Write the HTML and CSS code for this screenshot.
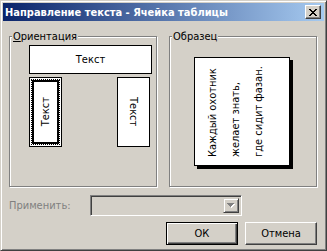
FILE: index.html
```html
<!DOCTYPE html>
<html>
<head>
    <title>Направление текста - Ячейка таблицы</title>
    <link rel="stylesheet" href="styles.css">
</head>
<body>
    <div class="window">
        <!-- Title bar -->
        <div class="titlebar">
            <span class="title">Направление текста - Ячейка таблицы</span>
            <button class="close-btn">
                <svg width="8" height="7" viewBox="0 0 8 7" shape-rendering="crispEdges">
                    <path d="M0 0h2v1h-2zM6 0h2v1h-2zM1 1h2v1h-2zM5 1h2v1h-2zM2 2h4v1h-4zM3 3h2v1h-2zM2 4h4v1h-4zM1 5h2v1h-2zM5 5h2v1h-2zM0 6h2v1h-2zM6 6h2v1h-2z" fill="#000"/>
                </svg>
            </button>
        </div>

        <div class="content">
            <div class="groups">
                <!-- Orientation -->
                <div class="group">
                    <span class="legend"><u>О</u>риентация</span>
                    <div class="orient">
                        <div class="orient-btn horizontal">Текст</div>
                        <div class="orient-row">
                            <div class="orient-btn vertical selected">
                                <div class="focus">
                                    <div class="face"><span class="text-up">Текст</span></div>
                                </div>
                            </div>
                            <div class="orient-btn vertical"><span class="text-down">Текст</span></div>
                        </div>
                    </div>
                </div>

                <!-- Sample -->
                <div class="group">
                    <span class="legend">Образец</span>
                    <div class="sample">
                        <div class="sample-text">Каждый охотник<br>желает знать,<br>где сидит фазан.</div>
                    </div>
                </div>
            </div>

            <div class="apply-row">
                <span class="apply-label">Применить:</span>
                <div class="combo">
                    <div class="combo-arrow">
                        <svg width="8" height="5" viewBox="0 0 8 5" shape-rendering="crispEdges">
                            <path d="M1 1h7v1h-7zM2 2h5v1h-5zM3 3h3v1h-3zM4 4h1v1h-1z" fill="#fff"/>
                            <path d="M0 0h7v1h-7zM1 1h5v1h-5zM2 2h3v1h-3zM3 3h1v1h-1z" fill="#808080"/>
                        </svg>
                    </div>
                </div>
            </div>

            <div class="buttons">
                <button class="btn default">ОК</button>
                <button class="btn">Отмена</button>
            </div>
        </div>
    </div>
</body>
</html>
```

FILE: styles.css
```css
body {
    margin: 0;
    background-color: #d4d0c8;
    font-family: "DejaVu Sans Condensed", "DejaVu Sans", sans-serif;
    font-size: 11px;
    color: #000;
}
.window {
    width: 327px;
    height: 251px;
    box-sizing: border-box;
    border: 1px solid;
    border-color: #d4d0c8 #404040 #404040 #d4d0c8;
    box-shadow: inset 1px 1px #fff, inset -1px -1px #808080;
    padding: 2px;
    display: flex;
    flex-direction: column;
    background-color: #d4d0c8;
}
.titlebar {
    height: 18px;
    display: flex;
    align-items: center;
    justify-content: space-between;
    padding: 0 3px 0 2px;
    background: linear-gradient(to right, #0a246a, #a6caf0);
}
.title {
    color: #fff;
    font-weight: bold;
}
.close-btn {
    width: 16px;
    height: 14px;
    padding: 0;
    display: flex;
    align-items: center;
    justify-content: center;
    background-color: #d4d0c8;
    border: 1px solid;
    border-color: #fff #404040 #404040 #fff;
    box-shadow: inset -1px -1px #808080;
}
.content {
    flex: 1;
    display: flex;
    flex-direction: column;
    padding: 15px 5px 0 6px;
}
.groups {
    display: flex;
    gap: 12px;
}
.group {
    position: relative;
    width: 148px;
    height: 151px;
    box-sizing: border-box;
    border: 1px solid #808080;
    box-shadow: 1px 1px #fff, inset 1px 1px #fff;
}
.legend {
    position: absolute;
    top: -7px;
    left: 2px;
    padding: 0 1px;
    line-height: 13px;
    background-color: #d4d0c8;
}
.orient {
    padding: 8px 0 0 19px;
}
.orient-btn {
    box-sizing: border-box;
    border: 1px solid #000;
    background-color: #fff;
    display: flex;
    align-items: center;
    justify-content: center;
}
.horizontal {
    width: 123px;
    height: 29px;
}
.orient-row {
    display: flex;
    justify-content: space-between;
    width: 121px;
    margin-top: 3px;
}
.vertical {
    width: 33px;
    height: 70px;
}
.selected {
    padding: 1px;
    align-items: stretch;
    justify-content: stretch;
}
.focus {
    flex: 1;
    display: flex;
    border: 1px dotted #000;
}
.face {
    flex: 1;
    display: flex;
    align-items: center;
    justify-content: center;
    border: 2px solid #000;
    background-color: #fff;
}
.text-up {
    writing-mode: vertical-rl;
    transform: rotate(180deg);
}
.text-down {
    writing-mode: vertical-rl;
}
.sample {
    margin: 20px 0 0 24px;
    width: 96px;
    height: 109px;
    box-sizing: border-box;
    border: 1px solid #000;
    background-color: #fff;
    box-shadow: 3px 3px #000;
    padding: 8px 0 8px 6px;
}
.sample-text {
    height: 100%;
    writing-mode: vertical-rl;
    transform: rotate(180deg);
    line-height: 23px;
}
.apply-row {
    display: flex;
    align-items: center;
    margin-top: 8px;
}
.apply-label {
    width: 81px;
    color: #808080;
}
.combo {
    width: 152px;
    height: 21px;
    box-sizing: border-box;
    padding: 2px;
    display: flex;
    justify-content: flex-end;
    border: 1px solid;
    border-color: #808080 #fff #fff #808080;
    box-shadow: inset 1px 1px #404040, inset -1px -1px #d4d0c8;
}
.combo-arrow {
    width: 16px;
    height: 15px;
    box-sizing: border-box;
    display: flex;
    align-items: center;
    justify-content: center;
    border: 1px solid;
    border-color: #d4d0c8 #404040 #404040 #d4d0c8;
    box-shadow: inset 1px 1px #fff, inset -1px -1px #808080;
}
.buttons {
    display: flex;
    justify-content: flex-end;
    gap: 7px;
    margin-top: 6px;
    padding-right: 2px;
}
.btn {
    width: 72px;
    height: 23px;
    padding: 0;
    font-family: inherit;
    font-size: 11px;
    color: #000;
    background-color: #d4d0c8;
    border: 1px solid;
    border-color: #fff #404040 #404040 #fff;
    box-shadow: inset -1px -1px #808080;
}
.btn.default {
    border-color: #000;
    box-shadow: inset 1px 1px #fff, inset -1px -1px #404040, inset -2px -2px #808080;
}
```
